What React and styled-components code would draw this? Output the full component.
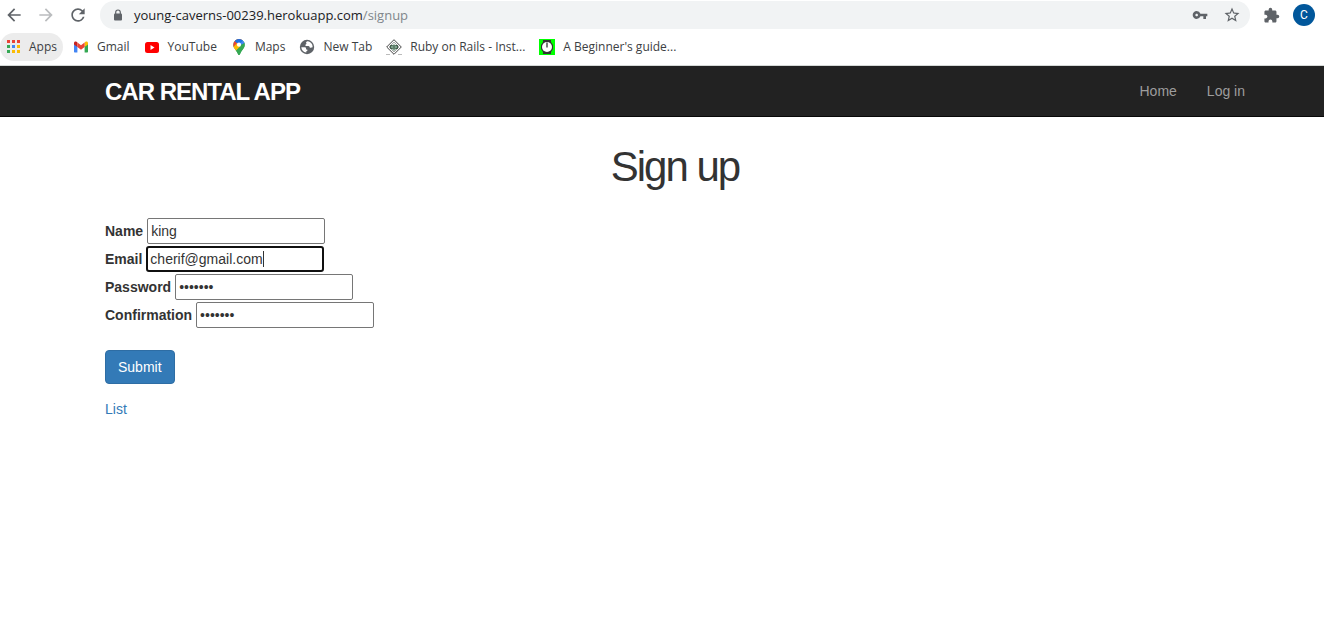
import React, { useState } from "react";
import styled, { createGlobalStyle, css } from "styled-components";
import {
  MdArrowBack,
  MdArrowForward,
  MdRefresh,
  MdVpnKey,
  MdStarBorder,
  MdExtension,
} from "react-icons/md";

const GlobalStyle = createGlobalStyle`
  *, *::before, *::after { box-sizing: border-box; }
  body {
    margin: 0;
    background: #fff;
    color: #333;
    font: 14px/20px "Liberation Sans", Arial, sans-serif;
  }
`;

const uiFont = `"Open Sans", "Noto Sans", sans-serif`;

const Browser = styled.header`
  height: 66px;
  border-bottom: 1px solid #d5d9d7;
  background: #fff;
  color: #3c4043;
  font-family: ${uiFont};
`;

const Toolbar = styled.div`
  display: flex;
  align-items: center;
  height: 30px;
  padding: 0 9px 0 0;
`;

const IconButton = styled.button`
  display: flex;
  align-items: center;
  justify-content: center;
  flex: none;
  width: ${(p) => p.$width || 32}px;
  height: 28px;
  padding: 0;
  border: 0;
  background: none;
  color: ${(p) => (p.$faded ? "#babcbe" : "#5f6368")};
  svg { display: block; }
`;

const Navigation = styled.div`
  display: flex;
  width: 96px;
  margin-left: -2px;
  margin-right: 6px;
`;

const AddressBar = styled.div`
  display: flex;
  align-items: center;
  flex: 1;
  min-width: 0;
  height: 28px;
  padding: 0 2px 0 12px;
  border-radius: 14px;
  background: #f1f3f4;
  color: #5f6368;
`;

const Address = styled.span`
  flex: 1;
  margin-left: 10px;
  font-size: 13px;
  line-height: 20px;
  white-space: nowrap;
  color: #80868b;
  b { font-weight: 400; color: #202124; }
`;

const Avatar = styled.button`
  flex: none;
  width: 22px;
  height: 22px;
  padding: 0;
  border: 0;
  border-radius: 50%;
  background: #01579b;
  color: #fff;
  font: 12px/22px Roboto, sans-serif;
`;

const Bookmarks = styled.nav`
  display: flex;
  align-items: center;
  height: 28px;
  margin-top: 3px;
`;

const Bookmark = styled.a`
  display: flex;
  align-items: center;
  gap: 8px;
  height: 28px;
  padding: 0 7px;
  border-radius: 14px;
  color: inherit;
  font-size: 12px;
  line-height: 16px;
  white-space: nowrap;
  text-decoration: none;
  svg { flex: none; display: block; }
  ${(p) =>
    p.$active &&
    css`
      margin-right: 3px;
      padding: 0 6px 0 5px;
      background: #ececec;
    `}
`;

const Container = styled.div`
  padding: 0 79px 0 105px;
`;

const NavBar = styled.div`
  background: #222;
  border-bottom: 1px solid #080808;
`;

const NavInner = styled(Container)`
  display: flex;
  align-items: center;
  justify-content: space-between;
  height: 50px;
`;

const Logo = styled.a`
  padding-top: 2px;
  color: #fff;
  font-size: 24px;
  line-height: 24px;
  font-weight: 700;
  letter-spacing: -1px;
  text-decoration: none;
`;

const Menu = styled.nav`
  display: flex;
  gap: 30px;
`;

const MenuLink = styled.a`
  color: #9d9d9d;
  text-decoration: none;
`;

const Title = styled.h1`
  margin: 28px 0 30px;
  font-size: 42px;
  line-height: 43px;
  font-weight: 400;
  letter-spacing: -2px;
  text-align: center;
`;

const Form = styled.form`
  display: flex;
  flex-direction: column;
  align-items: flex-start;
  gap: 2px;
`;

const Row = styled.div`
  display: flex;
  align-items: center;
  gap: 4px;
`;

const Label = styled.label`
  font-weight: 700;
`;

const InputWrap = styled.div`
  position: relative;
  display: flex;
`;

const Input = styled.input`
  width: 178px;
  height: 26px;
  padding: ${(p) => (p.$focused ? "1px 2px" : "2px 3px")};
  border: ${(p) => (p.$focused ? "2px solid #101010" : "1px solid #767676")};
  border-radius: ${(p) => (p.$focused ? 3 : 2)}px;
  outline: none;
  background: #fff;
  color: #333;
  font: 14px/20px "Liberation Sans", Arial, sans-serif;
  caret-color: transparent;
`;

const Caret = styled.span`
  position: absolute;
  top: 5px;
  left: 117px;
  width: 1px;
  height: 16px;
  background: #333;
`;

const Submit = styled.button`
  margin-top: 20px;
  height: 34px;
  padding: 0 12px;
  border: 1px solid #2e6da4;
  border-radius: 4px;
  background: #337ab7;
  color: #fff;
  font: 14px/20px "Liberation Sans", Arial, sans-serif;
`;

const ListLink = styled.a`
  display: inline-block;
  margin-top: 15px;
  color: #337ab7;
  text-decoration: none;
`;

function LockIcon() {
  return (
    <svg width="12" height="12" viewBox="0 0 12 12">
      <rect x="2" y="4.500" width="8" height="7" rx="1" fill="#5f6368" />
      <path d="M3.700 5V3.300a2.300 2.300 0 0 1 4.600 0V5" fill="none" stroke="#5f6368" strokeWidth="1.200" />
    </svg>
  );
}

function AppsIcon() {
  const colors = [
    "#ea4335", "#ea4335", "#ea4335",
    "#34a853", "#4285f4", "#fbbc04",
    "#34a853", "#fbbc04", "#fbbc04",
  ];
  return (
    <svg width="16" height="16" viewBox="0 0 16 16" shapeRendering="crispEdges">
      {colors.map((c, i) => (
        <rect key={i} x={2 + (i % 3) * 5} y={1 + Math.floor(i / 3) * 5} width="3" height="3" fill={c} />
      ))}
    </svg>
  );
}

function GmailIcon() {
  return (
    <svg width="16" height="16" viewBox="0 0 16 16">
      <path d="M1 4v8.400c0 .6.4 1 1 1h2.400V7z" fill="#4285f4" />
      <path d="M15 4v8.400c0 .6-.4 1-1 1h-2.400V7z" fill="#34a853" />
      <path d="M11.600 3.600V8L15 5.400V4c0-1.500-1.500-2-2.500-1.200z" fill="#fbbc04" />
      <path d="M4.400 3.600V8L1 5.400V4c0-1.500 1.500-2 2.500-1.200z" fill="#c5221f" />
      <path d="M4.400 3.500L8 6.200l3.600-2.700V8L8 10.700 4.400 8z" fill="#ea4335" />
    </svg>
  );
}

function YouTubeIcon() {
  return (
    <svg width="16" height="16" viewBox="0 0 16 16">
      <rect x="1" y="3" width="14" height="11" rx="2.500" fill="#f00" />
      <path d="M6.500 6v5l4-2.500z" fill="#fff" />
    </svg>
  );
}

function MapsIcon() {
  return (
    <svg width="16" height="16" viewBox="0 0 16 16">
      <defs>
        <clipPath id="pin">
          <path d="M8 0a5.700 5.700 0 0 0-5.700 5.700c0 3.300 2.500 4.800 4.200 8.300.5 1 .7 2 1.500 2s1-1 1.500-2c1.700-3.500 4.200-5 4.200-8.300A5.700 5.700 0 0 0 8 0z" />
        </clipPath>
      </defs>
      <g clipPath="url(#pin)">
        <path d="M0 0h16v16H0z" fill="#34a853" />
        <path d="M0 12L12 0H0z" fill="#ea4335" />
        <path d="M3.500 2L8 5.800 14.500-1H4z" fill="#1a73e8" />
        <path d="M8 5.700L13 0l2 5-7 .7z" fill="#4285f4" />
        <path d="M2 8.500L6 4l3.500 3.500L4.500 13z" fill="#fbbc04" />
        <path d="M14 3v13H6l-2-3.500z" fill="#34a853" />
      </g>
      <circle cx="8" cy="5.700" r="2.100" fill="#fff" />
    </svg>
  );
}

function GlobeIcon() {
  return (
    <svg width="16" height="16" viewBox="0 0 16 16">
      <circle cx="8" cy="8" r="7.200" fill="#5f6368" />
      <path
        d="M8.500 2.300c-1 .3-1.500 1-1.500 1.700.8.300.6 1-.2 1.500-.8.400-.5 1.300.2 1.500h2.500c.8 0 1.200.8 1.200 1.500.9.500 1.700.2 2.900-.2.300-2.800-1.400-5.300-5.100-6zM2.300 8.200c.2 2.700 2 4.900 5 5.400v-1.300c1-.1 1.200-.6 1.200-1.500-.8 0-1.500-.5-1.500-1.500 0-.8-.6-1.100-1.500-1.100z"
        fill="#fff"
      />
    </svg>
  );
}

function DiamondIcon() {
  return (
    <svg width="16" height="16" viewBox="0 0 16 16">
      <path d="M0 15.500H4M12 15.500H16" stroke="#bbb" fill="none" />
      <path d="M8 0.700 L15.300 8 L8 15.300 L0.700 8 Z" fill="#fff" stroke="#444" />
      <path d="M8 3 L13 8 L8 13 L3 8 Z" fill="#eef1ef" stroke="#888" strokeWidth="0.700" />
      <path d="M4 6h3l1-1 1 1h3v4h-2l-2 2-2-2H4z" fill="#7fa38c" />
      <path d="M6.500 6.500h-2v3h2M8 6v4M9.500 6.500h2v3h-2" stroke="#33483b" strokeWidth="0.800" fill="none" />
    </svg>
  );
}

function ClockIcon() {
  return (
    <svg width="16" height="16" viewBox="0 0 16 16">
      <path d="M0 0h16v16H0z" fill="#0f0" />
      <path d="M4 1h8v2l2 3v4l-2 3v2H4v-2L2 10V6l2-3z" fill="#333" />
      <circle cx="8" cy="8" r="5" fill="#fff" />
      <path d="M8 3.500V8.500" stroke="#222" strokeWidth="1.200" />
    </svg>
  );
}

const bookmarks = [
  { label: "Apps", Icon: AppsIcon, active: true },
  { label: "Gmail", Icon: GmailIcon },
  { label: "YouTube", Icon: YouTubeIcon },
  { label: "Maps", Icon: MapsIcon },
  { label: "New Tab", Icon: GlobeIcon },
  { label: "Ruby on Rails - Inst...", Icon: DiamondIcon },
  { label: "A Beginner's guide...", Icon: ClockIcon },
];

const fields = [
  { id: "name", label: "Name", type: "text", value: "king" },
  { id: "email", label: "Email", type: "email", value: "cherif@gmail.com", focused: true },
  { id: "password", label: "Password", type: "password", value: "sedan42" },
  { id: "confirmation", label: "Confirmation", type: "password", value: "sedan42" },
];

function Field({ id, label, type, value, focused }) {
  const [text, setText] = useState(value);
  return (
    <Row>
      <Label htmlFor={id}>{label}</Label>
      <InputWrap>
        <Input
          id={id}
          type={type}
          value={text}
          $focused={focused}
          onChange={(e) => setText(e.target.value)}
        />
        {focused && <Caret />}
      </InputWrap>
    </Row>
  );
}

export default function App() {
  return (
    <>
      <GlobalStyle />
      <Browser>
        <Toolbar>
          <Navigation>
            <IconButton aria-label="Back"><MdArrowBack size={20} /></IconButton>
            <IconButton aria-label="Forward" $faded><MdArrowForward size={20} /></IconButton>
            <IconButton aria-label="Reload"><MdRefresh size={20} /></IconButton>
          </Navigation>
          <AddressBar>
            <LockIcon />
            <Address><b>young-caverns-00239.herokuapp.com</b>/signup</Address>
            <IconButton aria-label="Passwords"><MdVpnKey size={16} /></IconButton>
            <IconButton aria-label="Bookmark this page"><MdStarBorder size={18} /></IconButton>
          </AddressBar>
          <IconButton aria-label="Extensions" $width={43}><MdExtension size={17} /></IconButton>
          <Avatar aria-label="Profile">C</Avatar>
        </Toolbar>
        <Bookmarks>
          {bookmarks.map(({ label, Icon, active }) => (
            <Bookmark key={label} href="#" $active={active}>
              <Icon />
              {label}
            </Bookmark>
          ))}
        </Bookmarks>
      </Browser>
      <NavBar>
        <NavInner>
          <Logo href="#">CAR RENTAL APP</Logo>
          <Menu>
            <MenuLink href="#">Home</MenuLink>
            <MenuLink href="#">Log in</MenuLink>
          </Menu>
        </NavInner>
      </NavBar>
      <Container as="main">
        <Title>Sign up</Title>
        <Form onSubmit={(e) => e.preventDefault()}>
          {fields.map((f) => (
            <Field key={f.id} {...f} />
          ))}
          <Submit type="submit">Submit</Submit>
        </Form>
        <ListLink href="#">List</ListLink>
      </Container>
    </>
  );
}
